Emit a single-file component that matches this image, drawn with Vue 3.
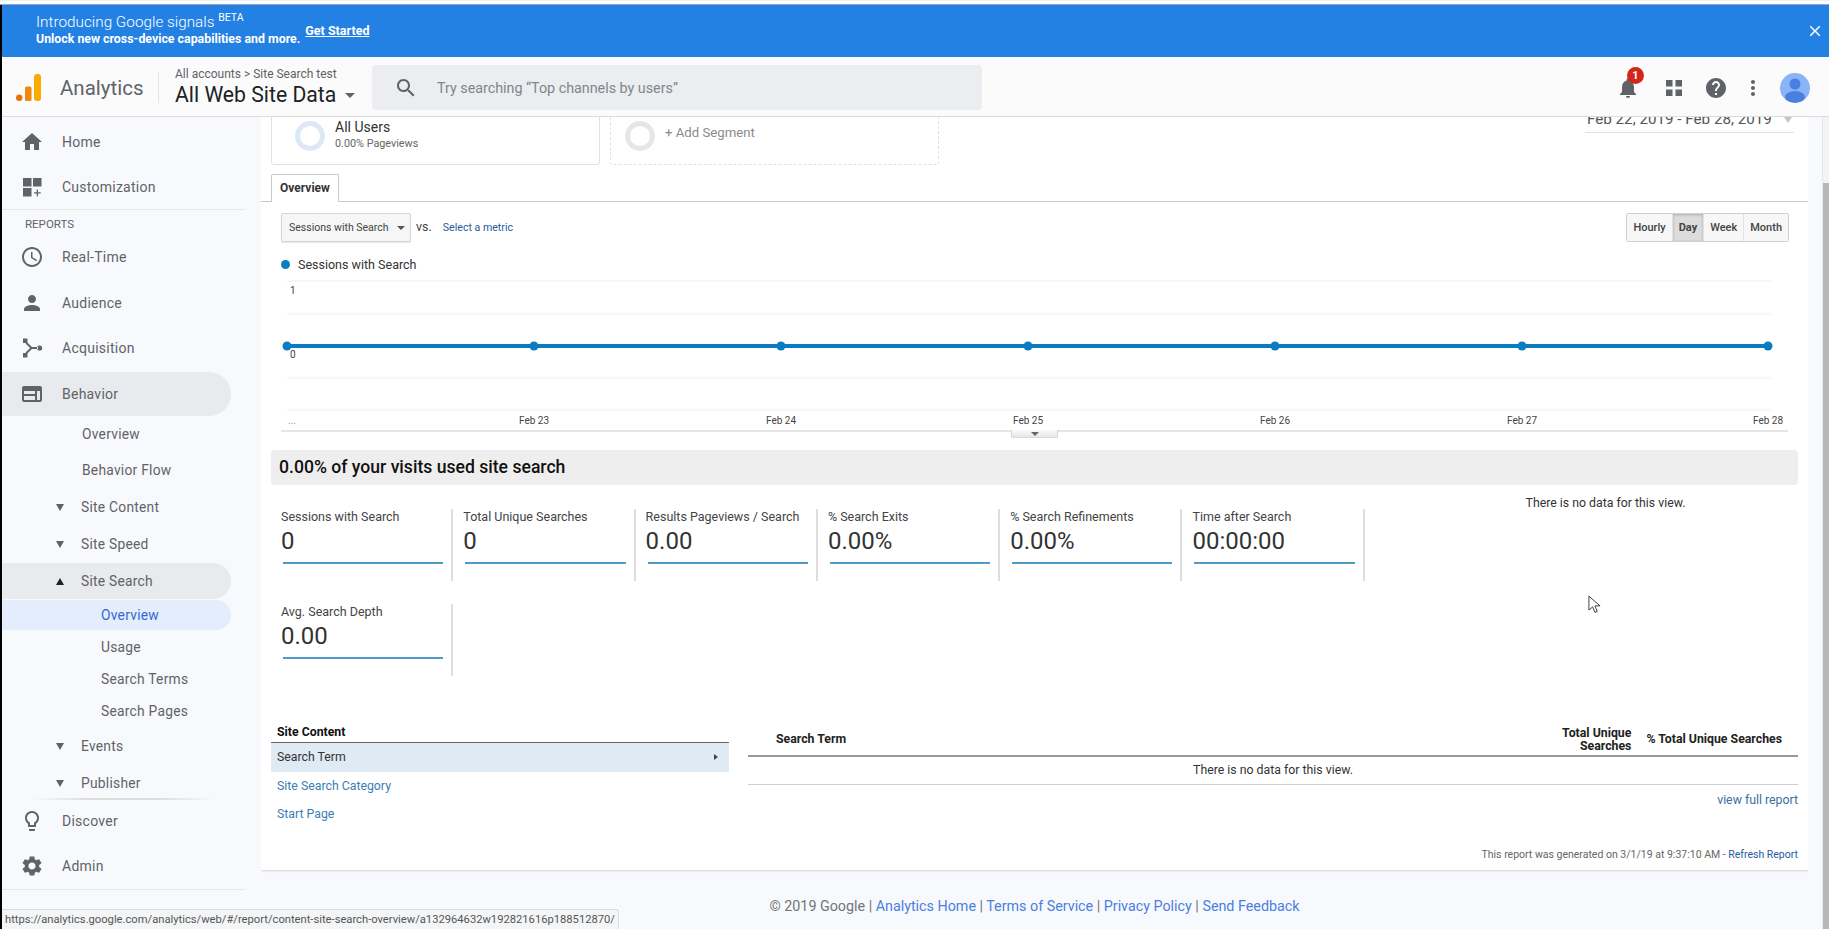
<template>
  <div class="page">
    <div class="top-strip"></div>
    <div class="frame">
      <div class="banner">
        <div class="banner-text">
          <div class="banner-title">Introducing Google signals <sup>BETA</sup></div>
          <div class="banner-sub">Unlock new cross-device capabilities and more.</div>
        </div>
        <a class="banner-link">Get Started</a>
        <svg class="banner-close" viewBox="0 0 24 24"><path :d="icons.close" /></svg>
      </div>

      <header class="topbar">
        <svg class="logo" viewBox="0 0 25 27">
          <circle cx="3.2" cy="23.8" r="3.2" fill="#e8710a" />
          <rect x="9" y="12.5" width="6.5" height="14.5" rx="1.5" fill="#f08a0c" />
          <rect x="18" y="0" width="7" height="27" rx="3" fill="#f9ab00" />
        </svg>
        <span class="product">Analytics</span>
        <div class="account">
          <div class="crumbs">All accounts &gt; Site Search test</div>
          <div class="view-name">All Web Site Data <i class="caret"></i></div>
        </div>
        <div class="search">
          <svg viewBox="0 0 24 24"><path :d="icons.search" /></svg>
          <span>Try searching “Top channels by users”</span>
        </div>
        <div class="top-actions">
          <div class="bell">
            <svg viewBox="0 0 24 24"><path :d="icons.bell" /></svg>
            <span class="badge">1</span>
          </div>
          <svg class="grid-icon" viewBox="0 0 24 24"><path :d="icons.apps" /></svg>
          <svg class="help" viewBox="0 0 24 24"><path :d="icons.help" /></svg>
          <svg class="dots" viewBox="0 0 24 24"><path :d="icons.dots" /></svg>
          <div class="avatar">
            <svg viewBox="0 0 30 30">
              <circle cx="15" cy="11" r="5.5" fill="#4a7fe0" />
              <ellipse cx="15" cy="24" rx="10" ry="6" fill="#4a7fe0" />
            </svg>
          </div>
        </div>
      </header>

      <div class="body">
        <nav class="sidebar">
          <div class="nav-main">
            <div v-for="item in nav" :key="item.key" class="nav-row" :class="item.cls">
              <svg v-if="item.icon" class="nav-icon" viewBox="0 0 24 24"><path :d="icons[item.icon]" /></svg>
              <i v-if="item.arrow" class="arrow" :class="item.arrow"></i>
              <span>{{ item.label }}</span>
            </div>
          </div>
          <div class="nav-foot">
            <div class="nav-row l1">
              <svg class="nav-icon" viewBox="0 0 24 24"><path :d="icons.bulb" /></svg>
              <span>Discover</span>
            </div>
            <div class="nav-row l1">
              <svg class="nav-icon" viewBox="0 0 24 24"><path :d="icons.gear" /></svg>
              <span>Admin</span>
            </div>
          </div>
        </nav>

        <main class="main">
          <div class="card">
            <div class="segments">
              <div class="segment">
                <i class="donut"></i>
                <div class="seg-text">
                  <div class="seg-name">All Users</div>
                  <div class="seg-sub">0.00% Pageviews</div>
                </div>
              </div>
              <div class="segment dashed">
                <i class="donut gray"></i>
                <span class="seg-add">+ Add Segment</span>
              </div>
              <div class="date-range">Feb 22, 2019 - Feb 28, 2019 <i class="date-caret"></i></div>
            </div>

            <div class="tabs"><div class="tab">Overview</div></div>

            <div class="chart-tools">
              <div class="metric-select">Sessions with Search <i class="caret small"></i></div>
              <span class="vs">vs.</span>
              <a class="select-metric">Select a metric</a>
              <div class="btn-group">
                <button v-for="b in ranges" :key="b" :class="{ active: b === 'Day' }">{{ b }}</button>
              </div>
            </div>

            <div class="legend"><i></i>Sessions with Search</div>

            <div class="chart">
              <svg width="1526" height="157">
                <line v-for="y in gridY" :key="y" x1="16" x2="1500" :y1="y" :y2="y" stroke="#eeeeee" />
                <line x1="10" x2="1517" y1="156" y2="156" stroke="#cccccc" />
                <text x="19" y="19" class="axis">1</text>
                <line x1="16" x2="1497" y1="71" y2="71" stroke="#0a7dc2" stroke-width="4" />
                <circle v-for="x in pointX" :key="x" :cx="x" cy="71" r="4.5" fill="#0a7dc2" />
                <text x="19" y="83" class="axis">0</text>
                <text x="17" y="149" class="axis dim">...</text>
                <text v-for="(d, i) in days" :key="d" :x="pointX[i + 1]" y="149" class="axis mid">{{ d }}</text>
              </svg>
              <div class="chart-handle"><i></i></div>
            </div>

            <div class="section-head">0.00% of your visits used site search</div>

            <div class="stats">
              <div class="metrics">
                <div v-for="m in metrics" :key="m.label" class="metric">
                  <div class="metric-label">{{ m.label }}</div>
                  <div class="metric-value">{{ m.value }}</div>
                  <div class="metric-line"></div>
                </div>
              </div>
              <div class="no-data-side">There is no data for this view.</div>
            </div>

            <div class="tables">
              <div class="dims">
                <div class="dims-title">Site Content</div>
                <div class="dim active">Search Term <i class="arrow-right"></i></div>
                <a class="dim">Site Search Category</a>
                <a class="dim">Start Page</a>
              </div>
              <div class="report">
                <div class="report-head">
                  <div class="col-term">Search Term</div>
                  <div class="col-total">Total Unique<br />Searches</div>
                  <div class="col-pct">% Total Unique Searches</div>
                </div>
                <div class="report-empty">There is no data for this view.</div>
                <a class="full-report">view full report</a>
              </div>
            </div>

            <div class="generated">This report was generated on 3/1/19 at 9:37:10 AM - <a>Refresh Report</a></div>
          </div>

          <footer class="footer">
            © 2019 Google | <a>Analytics Home</a> | <a>Terms of Service</a> | <a>Privacy Policy</a> | <a>Send Feedback</a>
          </footer>
        </main>

        <div class="scrollbar"><div class="thumb"></div></div>
      </div>
    </div>

    <svg class="pointer" viewBox="0 0 14 20"><path d="M1 1v15l4-3.5 2.5 6 2.5-1-2.5-6H13z" /></svg>
    <div class="status-bar">https://analytics.google.com/analytics/web/#/report/content-site-search-overview/a132964632w192821616p188512870/</div>
  </div>
</template>

<script setup>
const icons = {
  close: 'M19 6.41 17.59 5 12 10.59 6.41 5 5 6.41 10.59 12 5 17.59 6.41 19 12 13.41 17.59 19 19 17.59 13.41 12z',
  search: 'M15.5 14h-.79l-.28-.27C15.41 12.59 16 11.11 16 9.5 16 5.91 13.09 3 9.5 3S3 5.91 3 9.5 5.91 16 9.5 16c1.61 0 3.09-.59 4.23-1.57l.27.28v.79l5 4.99L20.49 19l-4.99-5zm-6 0C7.01 14 5 11.99 5 9.5S7.01 5 9.5 5 14 7.01 14 9.5 11.99 14 9.5 14z',
  bell: 'M12 22c1.1 0 2-.9 2-2h-4c0 1.1.9 2 2 2zm6-6v-5c0-3.07-1.63-5.64-4.5-6.32V4c0-.83-.67-1.5-1.5-1.5s-1.5.67-1.5 1.5v.68C7.64 5.36 6 7.92 6 11v5l-2 2v1h16v-1l-2-2z',
  apps: 'M4 4h6.5v6.5H4zM13.5 4H20v6.5h-6.5zM4 13.5h6.5V20H4zM13.5 13.5H20V20h-6.5z',
  help: 'M12 2C6.48 2 2 6.48 2 12s4.48 10 10 10 10-4.48 10-10S17.52 2 12 2zm1 17h-2v-2h2v2zm2.07-7.75l-.9.92C13.45 12.9 13 13.5 13 15h-2v-.5c0-1.1.45-2.1 1.17-2.83l1.24-1.26c.37-.36.59-.86.59-1.41 0-1.1-.9-2-2-2s-2 .9-2 2H8c0-2.21 1.79-4 4-4s4 1.79 4 4c0 .88-.36 1.68-.93 2.25z',
  dots: 'M12 8c1.1 0 2-.9 2-2s-.9-2-2-2-2 .9-2 2 .9 2 2 2zm0 2c-1.1 0-2 .9-2 2s.9 2 2 2 2-.9 2-2-.9-2-2-2zm0 6c-1.1 0-2 .9-2 2s.9 2 2 2 2-.9 2-2-.9-2-2-2z',
  home: 'M10 20v-6h4v6h5v-8h3L12 3 2 12h3v8z',
  custom: 'M3 3h8.5v8.5H3zM13 3h8.5v8.5H13zM3 13h8.5v8.5H3zM16.7 14.5h1.3v2.7h2.7v1.3H18v2.7h-1.3v-2.7H14v-1.3h2.7z',
  clock: 'M11.99 2C6.47 2 2 6.48 2 12s4.47 10 9.99 10C17.52 22 22 17.52 22 12S17.52 2 11.99 2zM12 20c-4.42 0-8-3.58-8-8s3.58-8 8-8 8 3.58 8 8-3.58 8-8 8zm.5-13H11v6l5.25 3.15.75-1.23-4.5-2.67z',
  person: 'M12 12c2.21 0 4-1.79 4-4s-1.79-4-4-4-4 1.79-4 4 1.79 4 4 4zm0 2c-2.67 0-8 1.34-8 4v2h16v-2c0-2.66-5.33-4-8-4z',
  acquisition: 'M3 2.5h4.5V7H3zM3 17h4.5v4.5H3zM17 12a2.6 2.6 0 1 0 5.2 0 2.6 2.6 0 1 0-5.2 0zM6.9 6l5 5H18v2h-6.1l-5 5-1.4-1.4 4.6-4.6-4.6-4.6z',
  behavior: 'M4 4h16a2 2 0 0 1 2 2v12a2 2 0 0 1-2 2H4a2 2 0 0 1-2-2V6a2 2 0 0 1 2-2zM4 9v3h11V9zM4 14v4h11v-4zM17 9v9h3V9z',
  bulb: 'M9 21c0 .55.45 1 1 1h4c.55 0 1-.45 1-1v-1H9v1zm3-19C8.14 2 5 5.14 5 9c0 2.38 1.19 4.47 3 5.74V17c0 .55.45 1 1 1h6c.55 0 1-.45 1-1v-2.26c1.81-1.27 3-3.36 3-5.74 0-3.86-3.14-7-7-7zm2.85 11.1l-.85.6V16h-4v-2.3l-.85-.6C7.8 12.16 7 10.63 7 9c0-2.76 2.24-5 5-5s5 2.24 5 5c0 1.63-.8 3.16-2.15 4.1z',
  gear: 'M19.14 12.94c.04-.3.06-.61.06-.94 0-.32-.02-.64-.07-.94l2.03-1.58c.18-.14.23-.41.12-.61l-1.92-3.32c-.12-.22-.37-.29-.59-.22l-2.39.96c-.5-.38-1.03-.7-1.62-.94l-.36-2.54c-.04-.24-.24-.41-.48-.41h-3.84c-.24 0-.43.17-.47.41l-.36 2.54c-.59.24-1.13.57-1.62.94l-2.39-.96c-.22-.08-.47 0-.59.22L2.74 8.87c-.12.21-.08.47.12.61l2.03 1.58c-.05.3-.09.63-.09.94s.02.64.07.94l-2.03 1.58c-.18.14-.23.41-.12.61l1.92 3.32c.12.22.37.29.59.22l2.39-.96c.5.38 1.03.7 1.62.94l.36 2.54c.05.24.24.41.48.41h3.84c.24 0 .44-.17.47-.41l.36-2.54c.59-.24 1.13-.56 1.62-.94l2.39.96c.22.08.47 0 .59-.22l1.92-3.32c.12-.22.07-.47-.12-.61l-2.01-1.58zM12 15.6c-1.98 0-3.6-1.62-3.6-3.6s1.62-3.6 3.6-3.6 3.6 1.62 3.6 3.6-1.62 3.6-3.6 3.6z'
}

const nav = [
  { key: 'home', label: 'Home', icon: 'home', cls: 'l1' },
  { key: 'custom', label: 'Customization', icon: 'custom', cls: 'l1 ruled' },
  { key: 'reports', label: 'REPORTS', cls: 'heading' },
  { key: 'realtime', label: 'Real-Time', icon: 'clock', cls: 'l1' },
  { key: 'audience', label: 'Audience', icon: 'person', cls: 'l1' },
  { key: 'acq', label: 'Acquisition', icon: 'acquisition', cls: 'l1' },
  { key: 'behavior', label: 'Behavior', icon: 'behavior', cls: 'l1 open' },
  { key: 'b-over', label: 'Overview', cls: 'l2' },
  { key: 'b-flow', label: 'Behavior Flow', cls: 'l2 flow' },
  { key: 'content', label: 'Site Content', arrow: 'down', cls: 'l2 group' },
  { key: 'speed', label: 'Site Speed', arrow: 'down', cls: 'l2 group' },
  { key: 'search', label: 'Site Search', arrow: 'up', cls: 'l2 group current' },
  { key: 's-over', label: 'Overview', cls: 'l3 selected' },
  { key: 's-usage', label: 'Usage', cls: 'l3' },
  { key: 's-terms', label: 'Search Terms', cls: 'l3' },
  { key: 's-pages', label: 'Search Pages', cls: 'l3' },
  { key: 'events', label: 'Events', arrow: 'down', cls: 'l2 group' },
  { key: 'publisher', label: 'Publisher', arrow: 'down', cls: 'l2 group' }
]

const ranges = ['Hourly', 'Day', 'Week', 'Month']
const gridY = [6, 39, 103, 135]
const pointX = [16, 263, 510, 757, 1004, 1251, 1497]
const days = ['Feb 23', 'Feb 24', 'Feb 25', 'Feb 26', 'Feb 27', 'Feb 28']

const metrics = [
  { label: 'Sessions with Search', value: '0' },
  { label: 'Total Unique Searches', value: '0' },
  { label: 'Results Pageviews / Search', value: '0.00' },
  { label: '% Search Exits', value: '0.00%' },
  { label: '% Search Refinements', value: '0.00%' },
  { label: 'Time after Search', value: '00:00:00' },
  { label: 'Avg. Search Depth', value: '0.00' }
]
</script>

<style>
html, body {
  margin: 0;
  height: 100%;
  overflow: hidden;
  background: #f8f9fc;
}
</style>

<style scoped>
.page {
  position: relative;
  width: 1829px;
  height: 929px;
  overflow: hidden;
  display: flex;
  flex-direction: column;
  font-family: Roboto, "Liberation Sans", sans-serif;
  color: #333;
}

.top-strip {
  height: 5px;
  background: #fff;
  border-top: 1px solid #e3f2fd;
  box-sizing: border-box;
  border-bottom: 1px solid #8fa9c4;
}

.frame {
  flex: 1;
  min-height: 0;
  display: flex;
  flex-direction: column;
  border-left: 2px solid #000;
}

.banner {
  height: 52px;
  flex-shrink: 0;
  background: #2481e4;
  color: #fff;
  display: flex;
  align-items: center;
  padding-left: 34px;
  position: relative;
}

.banner-text {
  margin-top: -3px;
}

.banner-title {
  font-size: 15.3px;
  line-height: 19px;
  font-weight: 300;
}

.banner-title sup {
  font-size: 10.5px;
  line-height: 0;
  font-weight: 400;
}

.banner-sub {
  font-size: 12.35px;
  line-height: 14px;
  font-weight: 700;
}

.banner-link {
  font-size: 12.5px;
  font-weight: 700;
  text-decoration: underline;
  margin: 0 0 2px 5px;
}

.banner-close {
  width: 18px;
  height: 18px;
  fill: #fff;
  margin-left: auto;
  margin-right: 5px;
}

.topbar {
  height: 60px;
  flex-shrink: 0;
  background: #fbfbfb;
  border-bottom: 1px solid #dcdcdc;
  box-sizing: border-box;
  padding-top: 2px;
  display: flex;
  align-items: center;
  position: relative;
  z-index: 2;
}

.logo {
  width: 25px;
  height: 27px;
  margin-left: 14px;
}

.product {
  font-size: 20.5px;
  color: #5f6368;
  margin-left: 19px;
  width: 98px;
  height: 31px;
  line-height: 33px;
  border-right: 1px solid #e4e4e4;
}

.account {
  margin-left: 16px;
  width: 197px;
}

.crumbs {
  font-size: 12px;
  line-height: 14px;
  color: #5f6368;
}

.view-name {
  font-size: 21.2px;
  line-height: 28px;
  color: #202124;
  white-space: nowrap;
}

.caret {
  display: inline-block;
  width: 0;
  height: 0;
  border: 5px solid transparent;
  border-top-color: #5f6368;
  border-bottom-width: 0;
  vertical-align: middle;
  margin-left: 3px;
}

.caret.small {
  margin-left: 6px;
  border-width: 4px 4px 0;
  border-top-color: #555;
}

.search {
  width: 610px;
  height: 45px;
  background: #ecedf0;
  border-radius: 4px;
  display: flex;
  align-items: center;
  font-size: 14.3px;
  color: #80868b;
}

.search svg {
  width: 24px;
  height: 24px;
  fill: #5f6368;
  margin-left: 22px;
  margin-right: 19px;
}

.top-actions {
  margin-left: auto;
  display: flex;
  align-items: center;
  padding-right: 19px;
}

.top-actions svg {
  fill: #5f6368;
}

.bell {
  position: relative;
  width: 24px;
  height: 24px;
}

.bell svg {
  width: 24px;
  height: 24px;
  display: block;
}

.badge {
  position: absolute;
  top: -9px;
  left: 11px;
  width: 17px;
  height: 17px;
  border-radius: 50%;
  background: #d3271d;
  color: #fff;
  font-size: 11px;
  font-weight: 700;
  line-height: 17px;
  text-align: center;
}

.grid-icon {
  width: 24px;
  height: 24px;
  margin-left: 22px;
}

.help {
  width: 24px;
  height: 24px;
  margin-left: 18px;
}

.dots {
  width: 24px;
  height: 24px;
  margin-left: 13px;
}

.avatar {
  width: 30px;
  height: 30px;
  border-radius: 50%;
  overflow: hidden;
  background: #8ab4f8;
  margin-left: 15px;
}

.avatar svg {
  display: block;
  width: 30px;
  height: 30px;
}

.body {
  flex: 1;
  min-height: 0;
  display: flex;
  position: relative;
}

.sidebar {
  width: 259px;
  flex-shrink: 0;
  padding-top: 2px;
  box-sizing: border-box;
  font-size: 14px;
  letter-spacing: 0.25px;
  color: #5f6368;
}

.nav-main {
  height: 679px;
}

.nav-row {
  display: flex;
  align-items: center;
  box-sizing: border-box;
  width: 229px;
  white-space: nowrap;
}

.nav-icon {
  width: 24px;
  height: 24px;
  fill: #5f6368;
  margin-left: 18px;
  margin-right: 18px;
  flex-shrink: 0;
}

.l1 {
  height: 45.6px;
}

.ruled {
  width: 243px;
  border-bottom: 1px solid #e6e6e6;
}

.heading {
  height: 24px;
  padding-left: 23px;
  padding-top: 3px;
  font-size: 11.5px;
  letter-spacing: 0;
}

.open {
  height: 44px;
  margin-top: 1px;
  background: #e8eaed;
  border-radius: 0 22px 22px 0;
}

.l2 {
  height: 36px;
  padding-left: 80px;
  font-size: 13.8px;
}

.flow {
  height: 37px;
}

.group {
  height: 37px;
  padding-left: 54px;
}

.current {
  height: 36px;
  background: #e8eaed;
  border-radius: 0 18px 18px 0;
}

.arrow {
  width: 0;
  height: 0;
  border-left: 4px solid transparent;
  border-right: 4px solid transparent;
  margin-right: 17px;
  margin-top: 1px;
}

.arrow.down {
  border-top: 7px solid #5f6368;
}

.arrow.up {
  border-bottom: 7px solid #202124;
}

.l3 {
  height: 32.2px;
  padding-left: 99px;
  font-size: 13.8px;
}

.selected {
  height: 30.5px;
  margin-top: 1px;
  background: #e3edfb;
  color: #3367d6;
  border-radius: 0 15px 15px 0;
}

.nav-foot {
  width: 243px;
  border-bottom: 1px solid #e6e6e6;
  position: relative;
}

.nav-foot::before {
  content: "";
  position: absolute;
  top: 0;
  left: 30px;
  right: 30px;
  height: 2px;
  background: linear-gradient(90deg, transparent, #ddd 30%, #ddd 70%, transparent);
}

.main {
  width: 1547px;
  flex-shrink: 0;
  overflow: hidden;
}

.card {
  height: 765px;
  margin-top: -12px;
  box-sizing: border-box;
  background: #fff;
  padding: 0 10px;
  box-shadow: 0 1px 2px rgba(0, 0, 0, 0.16);
  position: relative;
}

.segments {
  height: 60px;
  display: flex;
  font-size: 14px;
}

.segment {
  width: 329px;
  box-sizing: border-box;
  border: 1px solid #e2e2e2;
  border-radius: 0 0 3px 3px;
  display: flex;
  align-items: center;
  padding: 2px 0 0 23px;
}

.segment.dashed {
  margin-left: 10px;
  border-style: dashed;
  padding-left: 14px;
}

.donut {
  width: 20px;
  height: 20px;
  border: 5px solid #dce9f4;
  border-radius: 50%;
  margin-right: 10px;
  flex-shrink: 0;
}

.donut.gray {
  border-color: #e6e6e6;
  margin-right: 10px;
}

.seg-text {
  margin-top: -2px;
}

.seg-name {
  font-size: 14px;
  line-height: 17px;
  color: #333;
}

.seg-sub {
  font-size: 10.8px;
  line-height: 15px;
  color: #666;
}

.seg-add {
  font-size: 13.2px;
  color: #8a8a8a;
  margin-top: -8px;
}

.date-range {
  margin-left: auto;
  width: 209px;
  height: 28px;
  margin-right: 4px;
  box-sizing: border-box;
  border-bottom: 1px solid #e2e2e2;
  font-size: 15.2px;
  line-height: 29px;
  padding-left: 2px;
  color: #555;
  white-space: nowrap;
}

.date-caret {
  display: inline-block;
  border: 4px solid transparent;
  border-top: 6px solid #c4c4c4;
  border-bottom: 0;
  margin-left: 8px;
  vertical-align: middle;
}

.tabs {
  margin: 9px -10px 0;
  padding-left: 10px;
  height: 27px;
  border-bottom: 1px solid #c8c8c8;
}

.tab {
  width: 68px;
  height: 28px;
  box-sizing: border-box;
  background: #fff;
  border: 1px solid #c8c8c8;
  border-bottom: 0;
  border-radius: 2px 2px 0 0;
  font-size: 12px;
  font-weight: 700;
  line-height: 27px;
  text-align: center;
  color: #333;
}

.chart-tools {
  display: flex;
  align-items: center;
  height: 29px;
  margin: 11px 9px 0 10px;
}

.metric-select {
  width: 130px;
  height: 29px;
  box-sizing: border-box;
  background: #f6f6f6;
  border: 1px solid #d4d4d4;
  border-radius: 2px;
  box-shadow: 0 1px 1px rgba(0, 0, 0, 0.1);
  font-size: 10.5px;
  line-height: 27px;
  padding-left: 7px;
  color: #444;
  white-space: nowrap;
}

.vs {
  font-size: 12.5px;
  margin: -3px 0 0 5px;
  color: #444;
}

.select-metric {
  font-size: 10.6px;
  color: #2a5a9a;
  margin-left: 11px;
}

.btn-group {
  margin-left: auto;
  display: flex;
  border: 1px solid #d0d0d0;
  border-radius: 2px;
  height: 29px;
  box-sizing: border-box;
}

.btn-group button {
  font: 500 11px Roboto, "Liberation Sans", sans-serif;
  color: #444;
  background: #f7f7f7;
  border: 0;
  border-left: 1px solid #e2e2e2;
  padding: 0 6px;
}

.btn-group button:first-child {
  border-left: 0;
}

.btn-group .active {
  background: #dcdcdc;
  box-shadow: inset 0 1px 3px rgba(0, 0, 0, 0.2);
  font-weight: 700;
}

.legend {
  display: flex;
  align-items: center;
  height: 16px;
  margin: 14px 0 0 10px;
  font-size: 12.5px;
  color: #333;
}

.legend i {
  width: 9px;
  height: 9px;
  border-radius: 50%;
  background: #0a7dc2;
  margin-right: 8px;
}

.chart {
  position: relative;
  height: 157px;
  margin-top: 3px;
}

.chart svg {
  display: block;
}

.axis {
  font-size: 10px;
  fill: #444;
}

.axis.mid {
  text-anchor: middle;
}

.axis.dim {
  fill: #999;
}

.chart-handle {
  position: absolute;
  left: 740px;
  top: 155px;
  width: 47px;
  height: 8px;
  box-sizing: border-box;
  background: linear-gradient(#fafafa, #e6e6e6);
  border: 1px solid #d8d8d8;
  border-top: 0;
  border-radius: 0 0 2px 2px;
  display: flex;
  justify-content: center;
}

.chart-handle i {
  border: 4px solid transparent;
  border-top: 4px solid #666;
  border-bottom: 0;
  margin-top: 2px;
}

.section-head {
  height: 35px;
  margin-top: 18px;
  background: #eeeeee;
  border-radius: 4px;
  padding-left: 8px;
  font-size: 17.6px;
  font-weight: 500;
  line-height: 35px;
  color: #111;
}

.stats {
  display: flex;
}

.metrics {
  width: 1094px;
  flex-shrink: 0;
  margin-top: 24px;
  display: grid;
  grid-template-columns: repeat(6, 182.3px);
  row-gap: 23px;
}

.metric {
  height: 72px;
  box-sizing: border-box;
  border-right: 2px solid #dedede;
  padding: 0 8px 0 10px;
  position: relative;
}

.metric-label {
  font-size: 12.5px;
  line-height: 15px;
  color: #444;
  white-space: nowrap;
}

.metric-value {
  font-size: 24px;
  line-height: 28px;
  margin-top: 3px;
  color: #333;
}

.metric-line {
  height: 2px;
  background: #4f9ac8;
  margin: 7px 0 0 2px;
}

.no-data-side {
  flex: 1;
  font-size: 12.3px;
  line-height: 14px;
  padding: 11px 0 0 48px;
  text-align: center;
  color: #333;
  white-space: nowrap;
}

.tables {
  display: flex;
  margin-top: 48px;
}

.dims {
  width: 458px;
  flex-shrink: 0;
  font-size: 12.3px;
}

.dims-title {
  height: 18px;
  line-height: 16px;
  padding-left: 6px;
  font-weight: 700;
  color: #111;
  border-bottom: 1px solid #666;
}

.dim {
  display: block;
  height: 28.5px;
  line-height: 28px;
  padding-left: 6px;
  color: #3a7eb8;
  position: relative;
}

.dim.active {
  background: #deeaf4;
  color: #333;
}

.arrow-right {
  position: absolute;
  right: 11px;
  top: 11px;
  border: 3.5px solid transparent;
  border-left: 4px solid #444;
  border-right: 0;
}

.report {
  flex: 1;
  margin-left: 19px;
  font-size: 12.3px;
}

.report-head {
  display: flex;
  align-items: center;
  height: 30px;
  margin-top: 1px;
  border-bottom: 2px solid #999;
  font-weight: 700;
  color: #222;
  line-height: 13px;
}

.col-term {
  flex: 1;
  padding-left: 28px;
  margin-top: -2px;
}

.col-total {
  text-align: right;
}

.col-pct {
  margin-left: 15px;
  margin-right: 16px;
  margin-top: -2px;
}

.report-empty {
  height: 27px;
  line-height: 27px;
  text-align: center;
  border-bottom: 1px solid #cfcfcf;
  color: #333;
}

.full-report {
  display: block;
  text-align: right;
  line-height: 16px;
  margin-top: 7px;
  color: #3a6ea5;
}

.generated {
  position: absolute;
  right: 10px;
  bottom: 9px;
  font-size: 10.5px;
  color: #666;
}

.generated a {
  color: #2a5a9a;
}

.footer {
  text-align: center;
  font-size: 14.3px;
  line-height: 18px;
  margin-top: 27px;
  color: #70757a;
}

.footer a {
  color: #4a7fe0;
}

.scrollbar {
  width: 7px;
  margin-left: 14px;
  border-left: 1px solid #e8e8e8;
  background: #f2f3f5;
  box-sizing: border-box;
  display: flex;
  flex-direction: column;
  justify-content: flex-end;
}

.thumb {
  height: 746px;
  background: #b8b8b8;
}

.pointer {
  position: absolute;
  left: 1588px;
  top: 595px;
  width: 13px;
  height: 19px;
  fill: #fff;
  stroke: #333;
  stroke-width: 1;
}

.status-bar {
  position: absolute;
  left: 2px;
  bottom: 0;
  width: 617px;
  height: 20px;
  box-sizing: border-box;
  background: #f4f5f7;
  border: 1px solid #dcdcdc;
  border-left: 0;
  border-bottom: 0;
  border-radius: 0 3px 0 0;
  font-size: 11.2px;
  line-height: 20px;
  padding-left: 3px;
  color: #555;
  white-space: nowrap;
  overflow: hidden;
}
</style>
